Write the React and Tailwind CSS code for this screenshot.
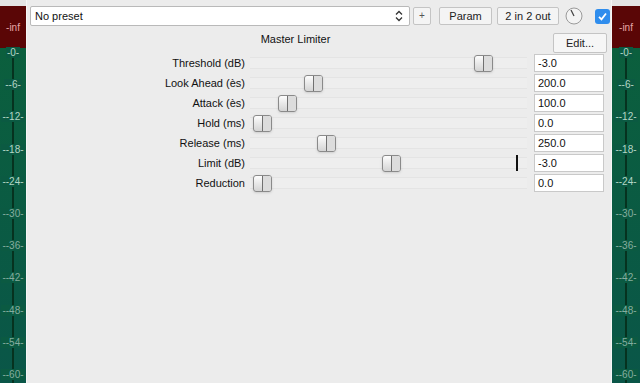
import React from 'react';

const marks = ['0', '-6', '-12', '-18', '-24', '-30', '-36', '-42', '-48', '-54', '-60'];

const rows = [
    { label: 'Threshold (dB)', value: '-3.0', pos: 224 },
    { label: 'Look Ahead (ès)', value: '200.0', pos: 54 },
    { label: 'Attack (ès)', value: '100.0', pos: 28 },
    { label: 'Hold (ms)', value: '0.0', pos: 3 },
    { label: 'Release (ms)', value: '250.0', pos: 67 },
    { label: 'Limit (dB)', value: '-3.0', pos: 132, mark: true },
    { label: 'Reduction', value: '0.0', pos: 3 },
];

function Meter() {
    return (
        <div className="w-full h-full flex flex-col relative">
            <div className="h-[42px] bg-[#5a0606] flex items-center justify-center">
                <span className="text-[10px] text-[#e7a6a6]">-inf</span>
            </div>
            <div className="flex-1 bg-gradient-to-b from-[#0b5f3d] to-[#0a5648] relative">
                <div className="absolute left-1/2 -translate-x-1/2 top-0 bottom-0 w-[2px] bg-[#06321f]" />
                {marks.map((m, i) => (
                    <div
                        key={m}
                        className="absolute left-0 right-0 text-center text-[10px] leading-none"
                        style={{ top: i * 32.2, color: i < 5 ? '#b3d6c5' : '#85ad9f' }}
                    >
                        <span className="bg-[#0b5a42] px-px">-{m}-</span>
                    </div>
                ))}
            </div>
        </div>
    );
}

function Thumb() {
    return (
        <div className="w-[19px] h-[17px] rounded-[3px] border border-[#8a8a8a] bg-gradient-to-b from-[#fdfdfd] to-[#d4d4d4] flex shadow-sm">
            <div className="flex-1 border-r border-[#707070]" />
            <div className="flex-1 bg-[#dcdcdc] rounded-r-[2px]" />
        </div>
    );
}

export default function App() {
    return (
        <div className="w-[640px] h-[383px] bg-[#ececec] flex overflow-hidden" style={{ fontFamily: '"Liberation Sans", Arial, sans-serif' }}>
            <div className="w-[27px] pt-[6px] border-r border-[#f6f6f6] bg-[#e4e4e4]">
                <Meter />
            </div>
            <div className="flex-1 flex flex-col">
                <div className="flex items-center h-[20px] mt-[6px] pl-[3px]">
                    <div className="w-[380px] h-[20px] bg-white border border-[#b9b9b9] rounded-[2px] flex items-center justify-between pl-[4px] pr-[6px] text-[11px] text-[#111]">
                        <span>No preset</span>
                        <svg width="8" height="12" viewBox="0 0 8 12" fill="none" stroke="#333" strokeWidth="1.3">
                            <path d="M1 4.5 L4 1.5 L7 4.5" />
                            <path d="M1 7.5 L4 10.5 L7 7.5" />
                        </svg>
                    </div>
                    <button className="ml-[3px] w-[18px] h-[18px] bg-[#f4f4f4] border border-[#c4c4c4] rounded-[2px] text-[10px] text-[#555] leading-none">+</button>
                    <button className="ml-[8px] w-[53px] h-[18px] bg-[#f4f4f4] border border-[#c4c4c4] rounded-[2px] text-[11px] text-[#222] leading-none">Param</button>
                    <button className="ml-[5px] w-[62px] h-[18px] bg-[#f4f4f4] border border-[#c4c4c4] rounded-[2px] text-[11px] text-[#222] leading-none">2 in 2 out</button>
                    <svg className="ml-[6px]" width="18" height="18" viewBox="0 0 18 18">
                        <circle cx="9" cy="9" r="8" fill="#f3f3f3" stroke="#9a9a9a" strokeWidth="1" />
                        <path d="M9 9 L6 3" stroke="#444" strokeWidth="1.2" />
                    </svg>
                    <div className="ml-[12px] w-[15px] h-[15px] rounded-[3px] bg-[#2f8ded] flex items-center justify-center">
                        <svg width="11" height="11" viewBox="0 0 11 11" fill="none" stroke="white" strokeWidth="1.8">
                            <path d="M2 5.8 L4.5 8.3 L9 2.5" />
                        </svg>
                    </div>
                </div>
                <div className="flex items-start h-[20px] mt-[7px]">
                    <div className="w-[526px] text-center text-[11px] leading-[13px] text-[#111] pl-[11px]">Master Limiter</div>
                    <button className="w-[54px] h-[20px] bg-[#f6f6f6] border border-[#c4c4c4] rounded-[2px] text-[11px] text-[#222] leading-none">Edit...</button>
                </div>
                <div className="flex flex-col">
                    {rows.map((r) => (
                        <div key={r.label} className="flex items-center h-[20px]">
                            <div className="w-[218px] text-right text-[11px] text-[#111]">{r.label}</div>
                            <div className="ml-[5px] w-[277px] h-[18px] relative">
                                <div className="absolute left-0 right-0 top-[3px] bottom-[3px] bg-[#eeeeee] border-y border-[#e4e4e4]" />
                                <div className="absolute top-[1px]" style={{ left: r.pos }}>
                                    <Thumb />
                                </div>
                                {r.mark && <div className="absolute left-[266px] top-[1px] w-[2px] h-[16px] bg-[#111]" />}
                            </div>
                            <div className="ml-[7px] w-[70px] h-[18px] bg-white border border-[#c9c9c9] text-[11px] text-[#111] flex items-center pl-[3px]">{r.value}</div>
                        </div>
                    ))}
                </div>
            </div>
            <div className="w-[29px] pt-[6px] border-l border-[#f6f6f6] bg-[#e4e4e4]">
                <Meter />
            </div>
        </div>
    );
}
